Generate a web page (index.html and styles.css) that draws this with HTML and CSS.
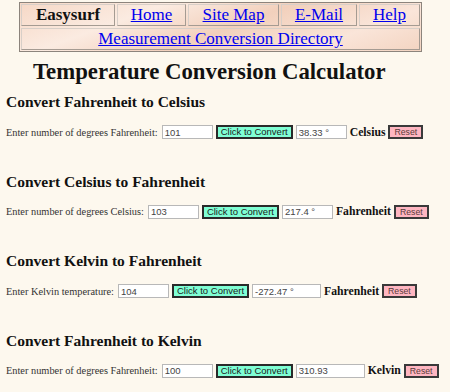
FILE: index.html
```html
<!DOCTYPE html>
<html lang="en">
<head>
  <meta charset="UTF-8">
  <title>Temperature Conversion Calculator</title>
  <link rel="stylesheet" href="styles.css">
</head>
<body>
  <nav class="topnav">
    <div class="cell brand">Easysurf</div>
    <div class="cell"><a href="#">Home</a></div>
    <div class="cell"><a href="#">Site Map</a></div>
    <div class="cell"><a href="#">E-Mail</a></div>
    <div class="cell"><a href="#">Help</a></div>
    <div class="cell wide"><a href="#">Measurement Conversion Directory</a></div>
  </nav>

  <h1 class="title">Temperature Conversion Calculator</h1>

  <section class="converter">
    <h2>Convert Fahrenheit to Celsius</h2>
    <form class="row">
      <label>Enter number of degrees Fahrenheit:</label>
      <input type="text" value="101">
      <button type="button" class="go">Click to Convert</button>
      <input type="text" value="38.33 °">
      <b>Celsius</b>
      <button type="reset" class="reset">Reset</button>
    </form>
  </section>

  <section class="converter">
    <h2>Convert Celsius to Fahrenheit</h2>
    <form class="row">
      <label>Enter number of degrees Celsius:</label>
      <input type="text" value="103">
      <button type="button" class="go">Click to Convert</button>
      <input type="text" value="217.4 °">
      <b>Fahrenheit</b>
      <button type="reset" class="reset">Reset</button>
    </form>
  </section>

  <section class="converter">
    <h2>Convert Kelvin to Fahrenheit</h2>
    <form class="row">
      <label>Enter Kelvin temperature:</label>
      <input type="text" value="104">
      <button type="button" class="go">Click to Convert</button>
      <input type="text" class="long" value="-272.47 °">
      <b>Fahrenheit</b>
      <button type="reset" class="reset">Reset</button>
    </form>
  </section>

  <section class="converter">
    <h2>Convert Fahrenheit to Kelvin</h2>
    <form class="row">
      <label>Enter number of degrees Fahrenheit:</label>
      <input type="text" value="100">
      <button type="button" class="go">Click to Convert</button>
      <input type="text" class="long" value="310.93">
      <b>Kelvin</b>
      <button type="reset" class="reset">Reset</button>
    </form>
  </section>
</body>
</html>
```

FILE: styles.css
```css
body {
  font-family: 'Liberation Serif', 'Times New Roman', serif;
  background-color: #fdf8ee;
  color: #111;
  margin: 0;
  padding: 2px 6px 0;
}
.topnav {
  display: grid;
  grid-template-columns: 94px 69px 91px 76px 61px;
  gap: 2px;
  width: 399px;
  margin-left: 13px;
  padding: 1px;
  border: 1px solid #8c847c;
  background: linear-gradient(160deg, #f6d8c6 0%, #fbebe1 28%, #f2d0bc 52%, #fae5d9 78%, #f3d4c1 100%);
}
.cell {
  height: 20px;
  border: 1px solid #a59b92;
  border-top-color: #d8cfc8;
  border-left-color: #d8cfc8;
  text-align: center;
  font-size: 17px;
  line-height: 20px;
}
.cell a {
  color: #0000ee;
}
.brand {
  font-weight: bold;
}
.wide {
  grid-column: 1 / -1;
}
.title {
  font-size: 22.75px;
  line-height: 26px;
  margin: 7px 0 0 27px;
}
.converter h2 {
  font-size: 15.5px;
  line-height: 18px;
  margin: 8px 0 0;
}
.converter + .converter h2 {
  margin-top: 33px;
}
.row {
  display: flex;
  align-items: center;
  gap: 3px;
  height: 15px;
  margin-top: 13.5px;
  font-size: 10.35px;
  white-space: nowrap;
  color: #333;
}
.row label {
  margin-right: 1px;
}
.row input {
  box-sizing: border-box;
  width: 51px;
  height: 14px;
  padding: 0 2px;
  border: 1px solid #b8b8b8;
  background: #fff;
  font: 9.5px 'Liberation Sans', Arial, sans-serif;
  color: #444;
}
.row input.long {
  width: 69px;
}
.row b {
  font-size: 11.7px;
  color: #111;
}
.row button {
  box-sizing: border-box;
  height: 14px;
  padding: 0 3px;
  border: 2px solid #2a2a2a;
  font: 9.5px/10px 'Liberation Sans', Arial, sans-serif;
  color: #1a1a1a;
}
.go {
  background-color: #7fffd4;
}
.reset {
  background-color: #ffb6c1;
}
.row .reset {
  padding: 0 4px;
  font-size: 8.7px;
  color: #5a3a3a;
  border-color: #3a3a3a;
}
```
